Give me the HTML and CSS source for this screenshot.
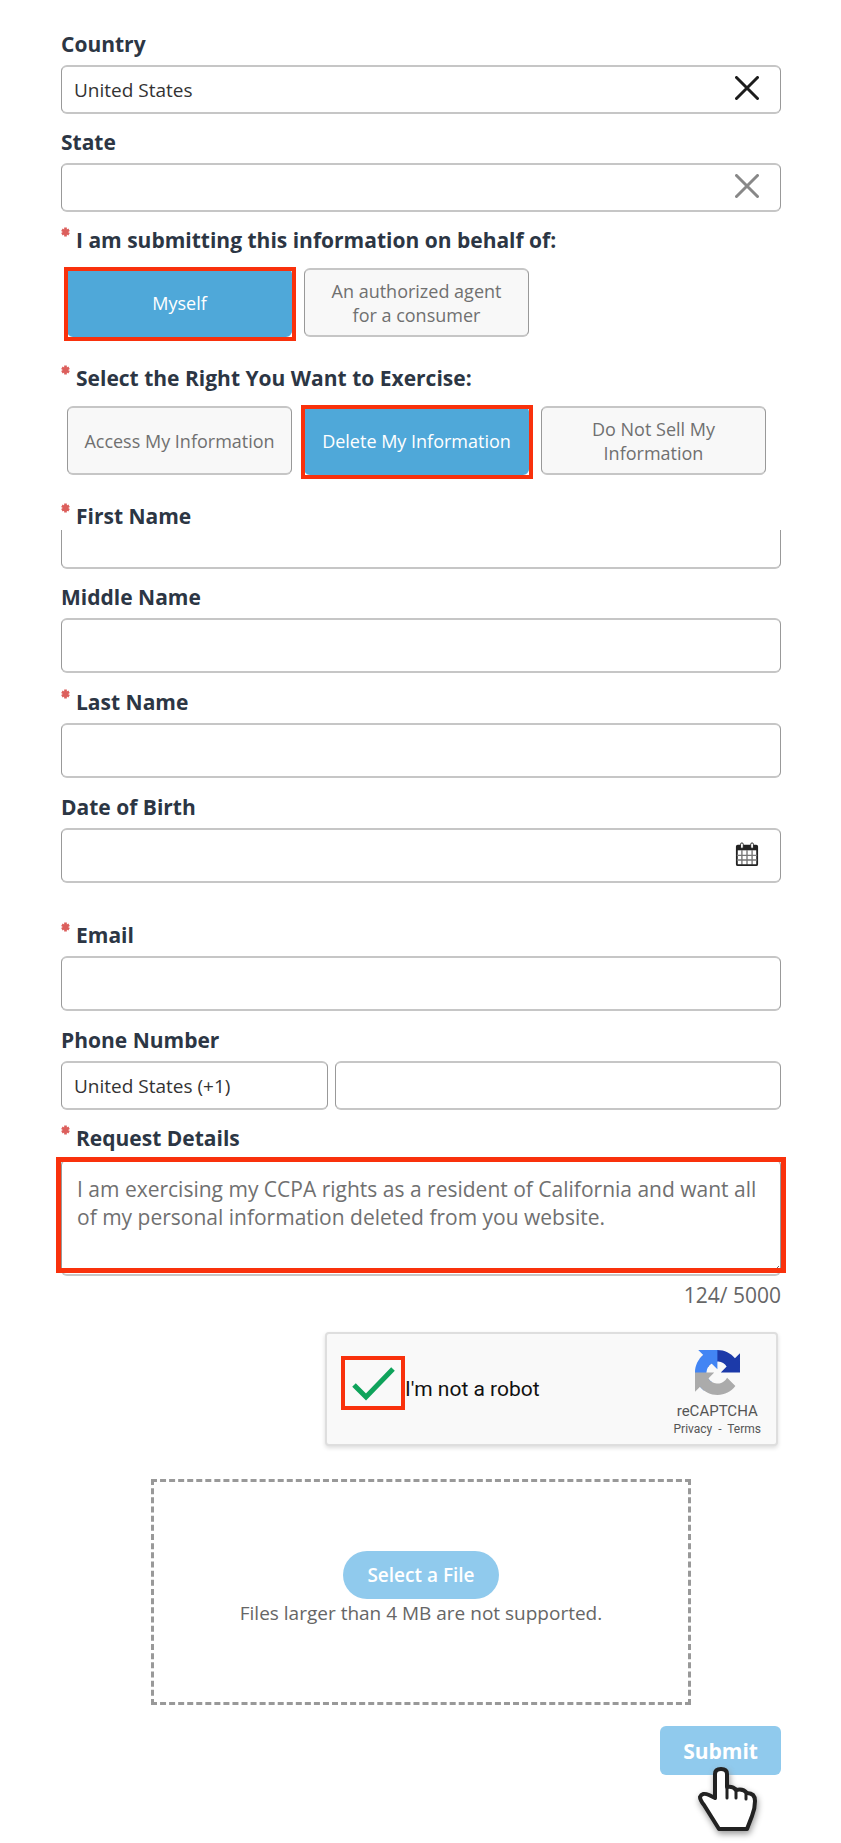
FILE: index.html
```html
<!DOCTYPE html>
<html lang="en">
<head>
    <meta charset="UTF-8">
    <meta name="viewport" content="width=device-width, initial-scale=1.0">
    <title>Privacy Request Form</title>
    <link rel="stylesheet" href="styles.css">
</head>
<body>
    <svg class="sprite" aria-hidden="true">
        <symbol id="star" viewBox="0 0 10 10">
            <path d="M5 0v10M1 2.500l8 5M9 2.500l-8 5" stroke="#dc5f5c" stroke-width="3"/>
        </symbol>
        <symbol id="cross" viewBox="0 0 24 24">
            <path d="M1.500 1.500l21 21M22.500 1.500l-21 21" stroke="currentColor" stroke-width="3" stroke-linecap="round"/>
        </symbol>
    </svg>

    <form class="request-form">
        <div class="field">
            <label class="label" for="country">Country</label>
            <div class="control">
                <input class="input" id="country" type="text" value="United States">
                <button type="button" class="icon-button" aria-label="Clear country"><svg class="icon"><use href="#cross"/></svg></button>
            </div>
        </div>
        <div class="field">
            <label class="label" for="state">State</label>
            <div class="control">
                <input class="input" id="state" type="text">
                <button type="button" class="icon-button muted" aria-label="Clear state"><svg class="icon"><use href="#cross"/></svg></button>
            </div>
        </div>

        <div class="choice-group" role="group" aria-labelledby="behalf">
            <div class="label" id="behalf"><svg class="star"><use href="#star"/></svg>I am submitting this information on behalf of:</div>
            <div class="choices">
                <div class="highlight"><button type="button" class="choice selected" aria-pressed="true">Myself</button></div>
                <button type="button" class="choice" aria-pressed="false">An authorized agent for a consumer</button>
            </div>
        </div>
        <div class="choice-group" role="group" aria-labelledby="right">
            <div class="label" id="right"><svg class="star"><use href="#star"/></svg>Select the Right You Want to Exercise:</div>
            <div class="choices">
                <button type="button" class="choice" aria-pressed="false">Access My Information</button>
                <div class="highlight"><button type="button" class="choice selected" aria-pressed="true">Delete My Information</button></div>
                <button type="button" class="choice" aria-pressed="false">Do Not Sell My Information</button>
            </div>
        </div>

        <div class="field">
            <label class="label" for="first"><svg class="star"><use href="#star"/></svg>First Name</label>
            <input class="input cut" id="first" type="text">
        </div>
        <div class="field">
            <label class="label" for="middle">Middle Name</label>
            <input class="input tall" id="middle" type="text">
        </div>
        <div class="field">
            <label class="label" for="last"><svg class="star"><use href="#star"/></svg>Last Name</label>
            <input class="input tall" id="last" type="text">
        </div>
        <div class="field birth">
            <label class="label" for="dob">Date of Birth</label>
            <div class="control">
                <input class="input tall" id="dob" type="text">
                <button type="button" class="icon-button" aria-label="Pick a date">
                    <svg class="icon" viewBox="0 0 24 26">
                        <rect x="1" y="4" width="22" height="21" rx="1" fill="#fff" stroke="#222" stroke-width="2"/>
                        <path d="M1 4h22v5H1z" fill="#222"/>
                        <path d="M6.500 9v16M12 9v16M17.500 9v16" stroke="#333"/>
                        <path d="M1 14.500h22M1 19.500h22" stroke="#777" stroke-width="1.500"/>
                        <rect x="5" y="1" width="3" height="6" rx="1.500" fill="#fff" stroke="#222"/>
                        <rect x="16" y="1" width="3" height="6" rx="1.500" fill="#fff" stroke="#222"/>
                    </svg>
                </button>
            </div>
        </div>
        <div class="field">
            <label class="label" for="email"><svg class="star"><use href="#star"/></svg>Email</label>
            <input class="input tall" id="email" type="email">
        </div>
        <div class="field">
            <label class="label" for="phone">Phone Number</label>
            <div class="phone">
                <select class="input" aria-label="Country code">
                    <option>United States (+1)</option>
                </select>
                <input class="input" id="phone" type="tel">
            </div>
        </div>
        <div class="details">
            <label class="label" for="details"><svg class="star"><use href="#star"/></svg>Request Details</label>
            <div class="details-box">
                <textarea class="input" id="details">I am exercising my CCPA rights as a resident of California and want all of my personal information deleted from you website.</textarea>
            </div>
            <p class="counter">124/ 5000</p>
        </div>

        <div class="captcha">
            <label class="robot">
                <span class="tick">
                    <input type="checkbox" checked>
                    <svg viewBox="0 0 64 54"><path d="M13 29l12 12 27-28" fill="none" stroke="#0fa35b" stroke-width="5"/></svg>
                </span>
                <span>I'm not a robot</span>
            </label>
            <div class="brand">
                <svg class="logo" viewBox="0 0 64 64">
                    <path fill="#1c3aa9" d="M64 31.955l-.033-1.370V4.687l-7.160 7.160C50.948 4.674 42.033.093 32.050.093c-10.400 0-19.622 4.960-25.458 12.640l11.736 11.860a15.550 15.550 0 0 1 4.754-5.334c2.050-1.600 4.952-2.906 8.968-2.906.485 0 .860.057 1.135.163 4.976.393 9.288 3.140 11.828 7.124l-8.307 8.307L64 31.953"/>
                    <path fill="#4285f4" d="M31.862.094l-1.370.033H4.594l7.160 7.160C4.580 13.147 0 22.060 0 32.046c0 10.400 4.960 19.622 12.640 25.458L24.500 45.768a15.550 15.550 0 0 1-5.334-4.754c-1.600-2.050-2.906-4.952-2.906-8.968 0-.485.057-.860.163-1.135.393-4.976 3.140-9.288 7.124-11.828l8.307 8.307L31.860.095"/>
                    <path fill="#ababab" d="M.001 32.045l.033 1.370v25.898l7.160-7.160c5.860 7.173 14.774 11.754 24.760 11.754 10.400 0 19.622-4.960 25.458-12.640l-11.736-11.860a15.550 15.550 0 0 1-4.754 5.334c-2.050 1.600-4.952 2.906-8.968 2.906-.485 0-.860-.057-1.135-.163-4.976-.393-9.288-3.140-11.828-7.124l8.307-8.307c-10.522.040-22.400.066-27.295-.005"/>
                </svg>
                <span class="brand-name">reCAPTCHA</span>
                <span class="brand-links"><a href="#">Privacy</a> &nbsp;-&nbsp; <a href="#">Terms</a></span>
            </div>
        </div>

        <div class="dropzone">
            <button type="button" class="file-button">Select a File</button>
            <p>Files larger than 4 MB are not supported.</p>
        </div>

        <div class="actions">
            <button type="submit" class="submit">Submit</button>
            <svg class="pointer" viewBox="0 0 68 74">
                <path d="M20 10q0-5 6-5t6 5v13q6-1 9 3 7-2 11 3 8 0 8 8 0 8-3 15l-5 13H24L9 41Q5 36 5 33q2-5 9-2l6 3z" fill="#fff" stroke="#222" stroke-width="4" stroke-linejoin="round"/>
                <path d="M32 22v12M41 25v9M51 28v7" stroke="#222" stroke-width="3" stroke-linecap="round"/>
            </svg>
        </div>
    </form>
</body>
</html>
```
FILE: styles.css
```css
* {
    box-sizing: border-box;
}
body {
    margin: 0;
    background-color: #fff;
    color: #666;
    font-family: "Open Sans", "Noto Sans", sans-serif;
    font-size: 19px;
}
button, input, select, textarea {
    font: inherit;
}
button {
    cursor: pointer;
}
p {
    margin: 0;
}
.sprite {
    display: none;
}
.request-form {
    padding: 30px 60px 67px 61px;
}
.field {
    margin-bottom: 14px;
}
.field:has(.tall) {
    margin-bottom: 15px;
}
.field.birth {
    margin-bottom: 38px;
}
.label {
    display: flex;
    gap: 6px;
    margin-bottom: 7px;
    color: #2c3644;
    font-size: 21px;
    font-weight: 700;
    line-height: 28px;
}
.star {
    width: 9px;
    height: 10px;
    margin-top: 1px;
}
.control {
    position: relative;
}
.input {
    display: block;
    width: 100%;
    height: 49px;
    padding: 0 12px;
    border: solid;
    border-width: 2px 1px;
    border-color: #c6c6c6 #999;
    border-radius: 6px;
    background-color: #fff;
    color: #333;
    appearance: none;
}
.input.tall {
    height: 55px;
}
.input.cut {
    height: 39px;
    margin-top: -7px;
    border-top: 0;
    border-radius: 0 0 6px 6px;
}
.icon-button {
    position: absolute;
    top: 0;
    right: 22px;
    height: 100%;
    padding: 0 0 3px;
    border: 0;
    background: none;
    color: #1c1c1c;
}
.icon-button.muted {
    color: #888;
}
.icon {
    display: block;
    width: 24px;
    height: 24px;
}
.choice-group {
    margin-bottom: 27px;
}
.choice-group .label {
    margin-bottom: 14px;
}
.choices {
    display: grid;
    grid-template-columns: repeat(3, 1fr);
    gap: 12px;
    padding: 0 15px 0 6px;
}
.choice {
    width: 100%;
    height: 69px;
    padding: 0 14px;
    border: solid;
    border-width: 2px 1px;
    border-color: #c6c6c6 #999;
    border-radius: 6px;
    background-color: #f8f8f8;
    color: #707070;
    font-size: 18px;
    line-height: 24px;
}
.choice.selected {
    border-color: #4fa8d9;
    background-color: #4fa8d9;
    color: #fff;
}
.highlight {
    position: relative;
}
.highlight::after {
    content: "";
    position: absolute;
    inset: -1px -4px -4px -3px;
    border: 4px solid #f9310c;
    pointer-events: none;
}
.phone {
    display: grid;
    grid-template-columns: 3fr 5fr;
    gap: 7px;
}
.details-box {
    position: relative;
}
.details-box::after {
    content: "";
    position: absolute;
    inset: -2px -5px 3px;
    border: 5px solid #f9310c;
    pointer-events: none;
}
.details-box .input {
    height: 117px;
    padding: 14px 15px;
    color: #707070;
    font-size: 21px;
    line-height: 28px;
}
.counter {
    margin-top: 5px;
    font-size: 21px;
    line-height: 28px;
    text-align: right;
}
.captcha {
    display: flex;
    justify-content: space-between;
    width: 453px;
    height: 114px;
    margin: 23px 3px 33px auto;
    padding: 16px 15px 0 14px;
    border: 2px solid #dedede;
    border-radius: 4px;
    background-color: #f9f9f9;
    box-shadow: 0 2px 4px #ddd;
    font-family: Roboto, sans-serif;
}
.robot {
    display: flex;
    align-items: flex-start;
    color: #111;
    font-size: 21px;
    line-height: 78px;
}
.tick {
    position: relative;
    width: 64px;
    height: 54px;
    margin-top: 6px;
}
.tick input {
    display: block;
    width: 100%;
    height: 100%;
    margin: 0;
    border: 4px solid #f9310c;
    appearance: none;
}
.tick svg {
    position: absolute;
    inset: 0;
}
.brand {
    display: flex;
    flex-direction: column;
    align-items: center;
    color: #555;
}
.logo {
    width: 45px;
    height: 45px;
}
.brand-name {
    margin-top: 6px;
    font-size: 15px;
    line-height: 20px;
}
.brand-links {
    font-size: 12px;
    line-height: 16px;
}
.brand-links a {
    color: inherit;
    text-decoration: none;
}
.dropzone {
    width: 75%;
    height: 226px;
    margin: 0 auto 21px;
    padding-top: 69px;
    border: 3px dashed #999;
    text-align: center;
    line-height: 28px;
}
.file-button {
    height: 48px;
    padding: 0 24px;
    border: 0;
    border-radius: 24px;
    background-color: #90caed;
    color: #fff;
    font-weight: 600;
}
.actions {
    position: relative;
    display: flex;
    justify-content: flex-end;
}
.submit {
    height: 49px;
    padding: 0 23px;
    border: 0;
    border-radius: 6px;
    background-color: #90caed;
    color: #fff;
    font-size: 21px;
    font-weight: 700;
}
.pointer {
    position: absolute;
    top: 38px;
    right: 18px;
    width: 68px;
    height: 74px;
    filter: drop-shadow(1px 3px 3px #999);
    pointer-events: none;
}
```
